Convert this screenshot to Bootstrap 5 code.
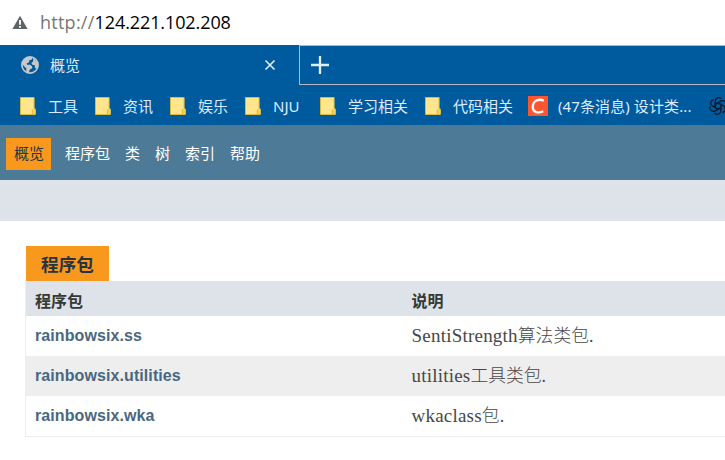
<!DOCTYPE html>
<html lang="zh-CN">
<head>
<meta charset="utf-8">
<title>概览</title>
<link href="https://cdn.jsdelivr.net/npm/bootstrap@5.3.0/dist/css/bootstrap.min.css" rel="stylesheet">
<style>
body{font-family:"Noto Sans","Noto Sans CJK SC",sans-serif;width:725px;height:460px;font-size:15px;line-height:20px}
svg{flex:none;display:block}
.address{height:45px;padding:0 0 1px 12px;font-family:"Open Sans","Noto Sans CJK SC",sans-serif;font-size:18px}
.address-text{margin-left:12px;color:#767676;letter-spacing:.25px;white-space:nowrap}
.address-text span{color:#000;letter-spacing:-.1px}
.tabs,.bookmarks{background:#005a9e;color:#dcebff}
.tabs{height:40px}
.active-tab{width:299px;padding:0 23px 0 21px}
.tab-title{margin-left:11px}
.new-tab{border:1px solid #b5b8bd;border-right:0;padding-left:11px}
.bookmarks{height:40px;padding:1px 0 0 20px}
.bm{width:75px;gap:12px}
.bm-study{width:105px}
.bm-code{width:103px}
.bm-site{width:181px;gap:10px;letter-spacing:.1px}
.doc-nav{height:55px;background:#4d7a97;padding:3px 0 0 6px;gap:15px;font-family:"Liberation Sans","Noto Sans CJK SC",sans-serif}
.doc-nav a{color:#fff;text-decoration:none}
.doc-nav a.current{background:#f8981d;color:#253441;height:32px;padding:6px 7px 0 8px;margin-right:-1px}
.sub-nav{height:41px;background:#dee3e9}
.summary{padding:25px 0 0 25px;font-family:"Liberation Sans","Noto Sans CJK SC",sans-serif}
.caption-tab{width:83px;height:35px;margin-left:1px;background:#f8981d;color:#253441;font-size:17.6px;font-weight:700;padding-top:2px}
.packages{border:1px solid #eee;border-top:0;border-right:0}
.pkg-row{display:grid;grid-template-columns:376.5px 1fr;height:40px;align-items:center;padding-left:9px}
.pkg-head{height:35px;background:#dee3e9;color:#353833;font-weight:700;font-size:16px;padding-top:7px}
.pkg-alt{background:#eeeeef}
.pkg-row a{color:#4a6782;font-weight:700;font-size:16px;letter-spacing:.09px;text-decoration:none}
.desc{font-family:"Liberation Serif","Noto Sans CJK SC",serif;font-size:17.8px;color:#474747;font-weight:300}
.latin{font-size:19px;font-weight:400;letter-spacing:.22px}
</style>
<script src="https://cdn.jsdelivr.net/npm/bootstrap@5.3.0/dist/js/bootstrap.bundle.min.js"></script>
</head>
<body class="bg-white overflow-hidden">
<svg width="0" height="0" class="position-absolute"><symbol id="folder" viewBox="0 0 16 18"><path d="M.5.5h13.6v11.2l1.2.8v5H.5z" fill="#ffe58c" stroke="#d9bb3f"/><path d="M12.5 17v-4.5l1.5-1h1.4V17z" fill="#f5d34e"/><path d="M12.3 17v-4.5" stroke="#cfae35" stroke-width=".8"/></symbol></svg>
<header class="address d-flex align-items-center">
<svg width="16" height="15" viewBox="0 0 16 15"><path d="M8 .7 15.6 14H.4z" fill="#5f6368"/><path d="M8 5v4.8M8 11v1.8" stroke="#fff" stroke-width="1.8"/></svg>
<div class="address-text">http://<span>124.221.102.208</span></div>
</header>
<div class="tabs d-flex">
<div class="active-tab d-flex align-items-center">
<svg width="18" height="18" viewBox="0 0 18 18"><circle cx="9" cy="9" r="8.1" fill="#005a9e" stroke="#c8c8c8" stroke-width="1.7"/><path d="M1.2 8C1.5 4 5 1 9 1h2.4l-.5 2.4-2.5.8-.5 2.2-2.1.9.2 1.4h3l2.2 1.5v2L8.6 13.8 8 17C5 16.4 5 14 5.4 12.5L2.9 10z" fill="#c8c8c8"/><path d="m12.2 2.1 4 3.9.7 4.1-1.6 2.9-1.5-1.7V9.1h-2.1L10.3 7l1.8-1.4z" fill="#c8c8c8"/></svg>
<span class="tab-title">概览</span>
<svg class="ms-auto" width="12" height="12" viewBox="0 0 12 12"><path d="m1.5 1.5 9 9m0-9-9 9" stroke="#e2efff" stroke-width="1.6"/></svg>
</div>
<div class="new-tab flex-grow-1 d-flex align-items-center"><svg width="18" height="18" viewBox="0 0 18 18"><path d="M0 9h18M9 0v18" stroke="#e2efff" stroke-width="2.3"/></svg></div>
</div>
<div class="bookmarks d-flex align-items-center text-nowrap">
<div class="bm d-flex flex-shrink-0 align-items-center"><svg width="16" height="18"><use href="#folder"/></svg>工具</div>
<div class="bm d-flex flex-shrink-0 align-items-center"><svg width="16" height="18"><use href="#folder"/></svg>资讯</div>
<div class="bm d-flex flex-shrink-0 align-items-center"><svg width="16" height="18"><use href="#folder"/></svg>娱乐</div>
<div class="bm d-flex flex-shrink-0 align-items-center"><svg width="16" height="18"><use href="#folder"/></svg>NJU</div>
<div class="bm bm-study d-flex flex-shrink-0 align-items-center"><svg width="16" height="18"><use href="#folder"/></svg>学习相关</div>
<div class="bm bm-code d-flex flex-shrink-0 align-items-center"><svg width="16" height="18"><use href="#folder"/></svg>代码相关</div>
<div class="bm bm-site d-flex flex-shrink-0 align-items-center"><svg width="20" height="20" viewBox="0 0 20 20"><path d="M0 0h20v20H0z" fill="#fc5531"/><path d="M15.8 4.6C11 2.5 5 4.5 4.8 10.8c-.1 5.7 5.3 6.8 10.4 4.5" fill="none" stroke="#fff" stroke-width="2.3"/></svg>(47条消息) 设计类...</div>
<svg width="18" height="18" viewBox="0 0 18 18" fill="none" stroke="#071d30" stroke-width="1.3"><g id="petal"><path d="M6.2 10.8V4.2A3.5 3.5 0 0 1 12.4 2M6.2 7.4l4.6-2.6"/></g><use href="#petal" transform="rotate(60 9 9)"/><use href="#petal" transform="rotate(120 9 9)"/><use href="#petal" transform="rotate(180 9 9)"/><use href="#petal" transform="rotate(240 9 9)"/><use href="#petal" transform="rotate(300 9 9)"/></svg>
</div>
<nav class="doc-nav d-flex align-items-center">
<a class="current" href="#">概览</a><a href="#">程序包</a><a href="#">类</a><a href="#">树</a><a href="#">索引</a><a href="#">帮助</a>
</nav>
<div class="sub-nav"></div>
<main class="summary">
<div class="caption-tab d-flex align-items-center justify-content-center">程序包</div>
<div class="packages">
<div class="pkg-row pkg-head"><div>程序包</div><div>说明</div></div>
<div class="pkg-row"><a href="#">rainbowsix.ss</a><div class="desc"><span class="latin">SentiStrength</span>算法类包.</div></div>
<div class="pkg-row pkg-alt"><a href="#">rainbowsix.utilities</a><div class="desc"><span class="latin">utilities</span>工具类包.</div></div>
<div class="pkg-row"><a href="#">rainbowsix.wka</a><div class="desc"><span class="latin">wkaclass</span>包.</div></div>
</div>
</main>
</body>
</html>
